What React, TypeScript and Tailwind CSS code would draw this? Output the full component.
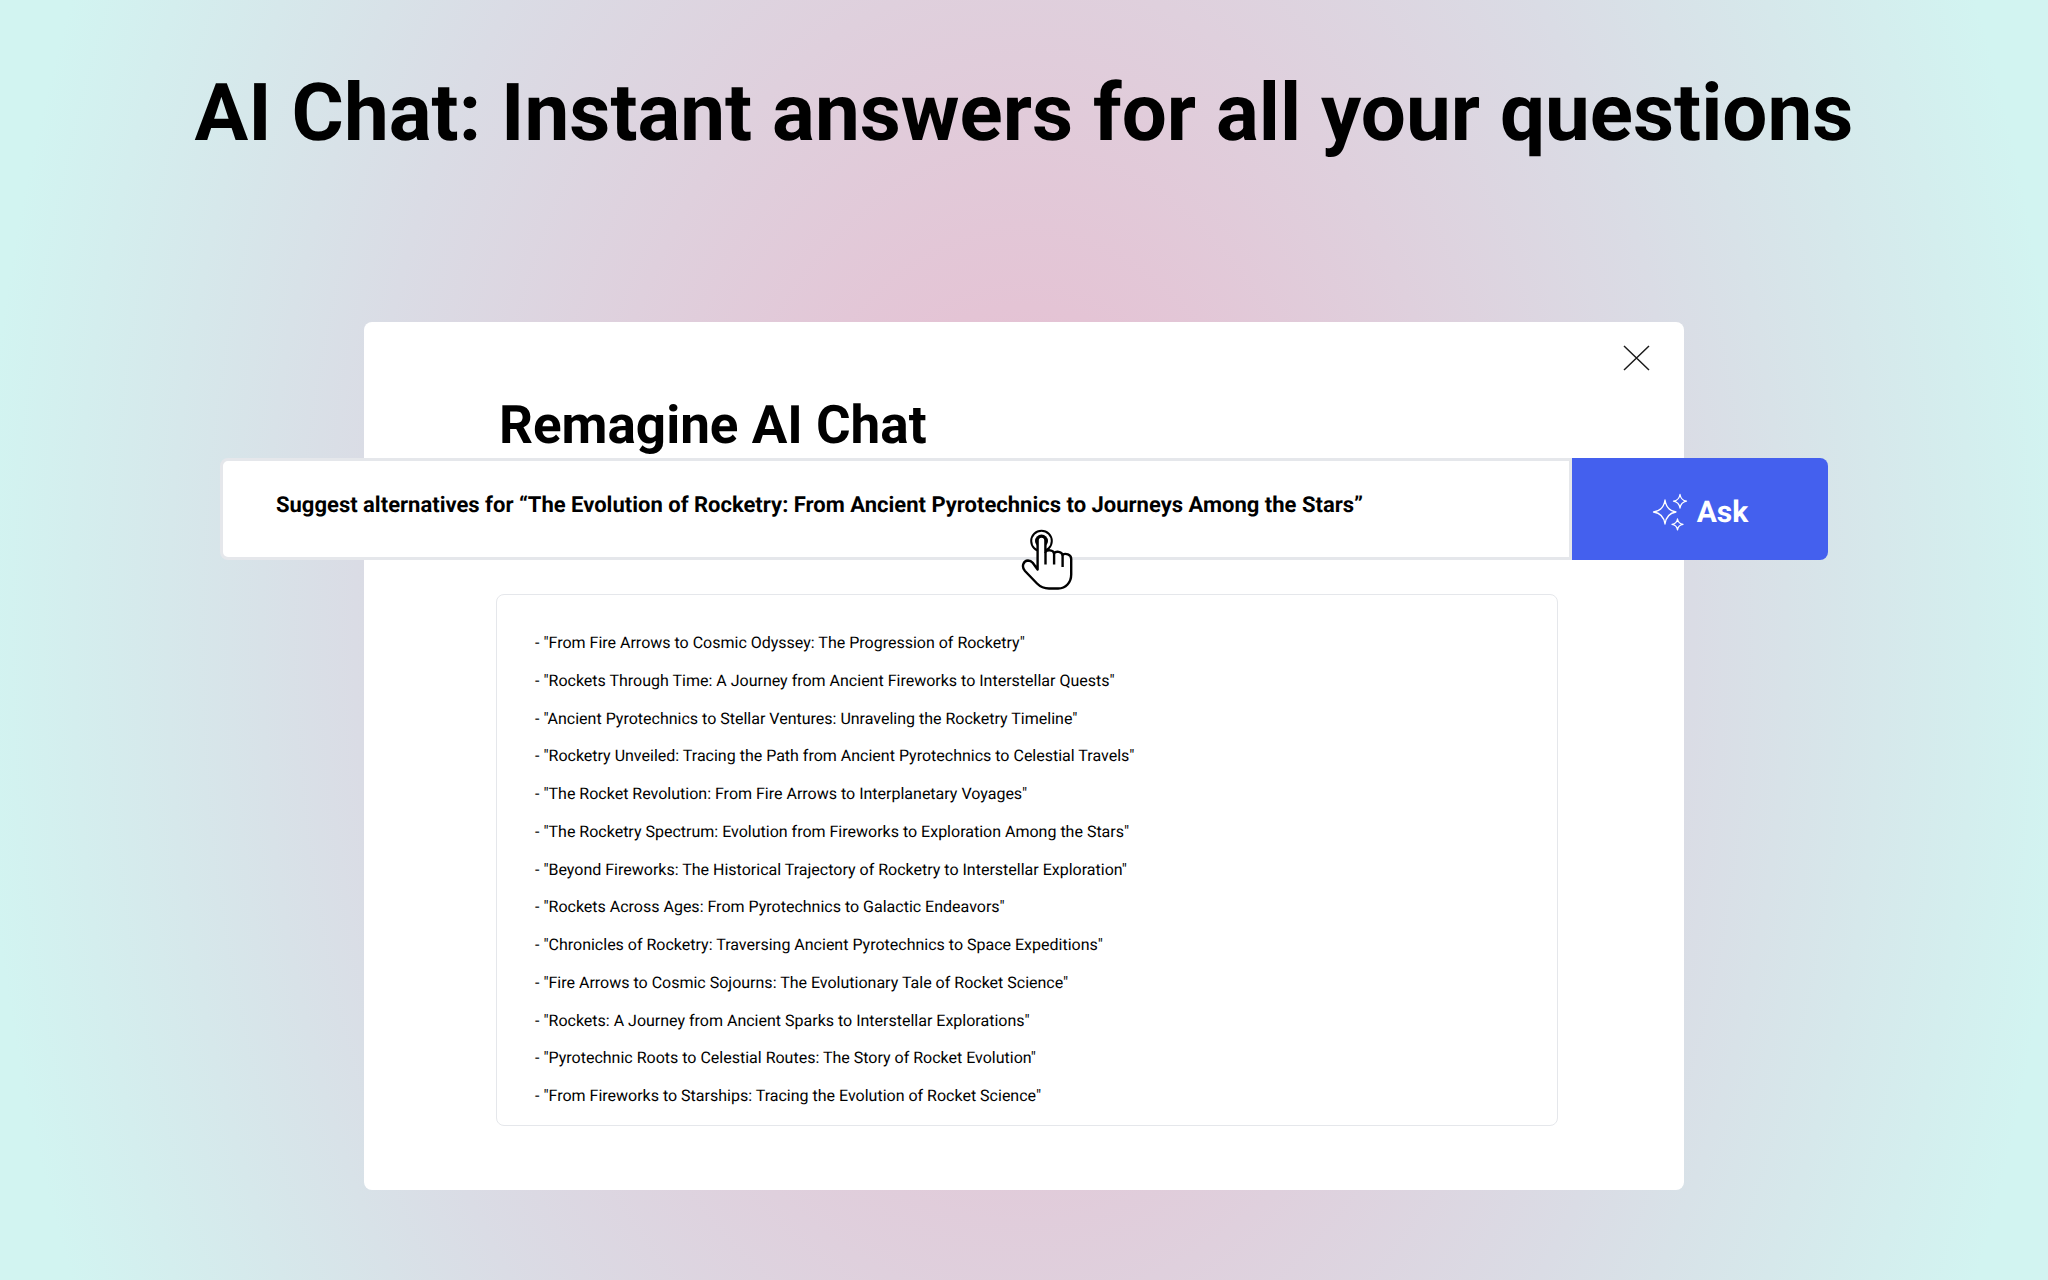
const results = [
  "From Fire Arrows to Cosmic Odyssey: The Progression of Rocketry",
  "Rockets Through Time: A Journey from Ancient Fireworks to Interstellar Quests",
  "Ancient Pyrotechnics to Stellar Ventures: Unraveling the Rocketry Timeline",
  "Rocketry Unveiled: Tracing the Path from Ancient Pyrotechnics to Celestial Travels",
  "The Rocket Revolution: From Fire Arrows to Interplanetary Voyages",
  "The Rocketry Spectrum: Evolution from Fireworks to Exploration Among the Stars",
  "Beyond Fireworks: The Historical Trajectory of Rocketry to Interstellar Exploration",
  "Rockets Across Ages: From Pyrotechnics to Galactic Endeavors",
  "Chronicles of Rocketry: Traversing Ancient Pyrotechnics to Space Expeditions",
  "Fire Arrows to Cosmic Sojourns: The Evolutionary Tale of Rocket Science",
  "Rockets: A Journey from Ancient Sparks to Interstellar Explorations",
  "Pyrotechnic Roots to Celestial Routes: The Story of Rocket Evolution",
  "From Fireworks to Starships: Tracing the Evolution of Rocket Science",
];

function CloseIcon() {
  return (
    <svg width="27" height="26" viewBox="0 0 27 26" fill="none" stroke="#1a1a1a" strokeWidth="1.5" aria-hidden="true">
      <path d="M1 1l25 24M26 1L1 25" />
    </svg>
  );
}

function SparklesIcon() {
  return (
    <svg width="36" height="38" viewBox="0 0 36 38" fill="none" stroke="white" strokeWidth="1.3" strokeLinejoin="round" aria-hidden="true">
      <path d="M13 7C14 14.500 17.500 18 24 19C17.500 20 14 23.500 13 31C12 23.500 8.500 20 1.500 19C8.500 18 12 14.500 13 7Z" />
      <path d="M28 1.500C28.600 5.500 30.500 7.500 34.500 8.200C30.500 9 28.600 11 28 15C27.400 11 25.500 9 21.500 8.200C25.500 7.500 27.400 5.500 28 1.500Z" />
      <path d="M25.500 26C26 29.300 27.500 30.800 31 31.400C27.500 32 26 33.500 25.500 36.800C25 33.500 23.500 32 20 31.400C23.500 30.800 25 29.300 25.500 26Z" />
    </svg>
  );
}

function HandPointer() {
  return (
    <svg className="pointer-events-none absolute left-[801px] top-[71px]" width="52" height="62" viewBox="0 0 52 62" fill="none" stroke="black" strokeWidth="2.4" strokeLinecap="butt" strokeLinejoin="round" aria-hidden="true">
      <circle cx="20.500" cy="12" r="10.300" fill="white" stroke="black" strokeWidth="2" />
      <circle cx="20.500" cy="12" r="6.500" fill="black" stroke="none" />
      <path fill="white" d="M16.600 40.500V11.500a3.900 3.900 0 0 1 7.800 0V23c1.500-2.500 8-2.300 8.600 1.200c2-2.300 7.600-1.700 8.400 1.500c3-1.800 8.800-.6 8.800 4.300V45.500c0 8-5.500 14-13 14H28c-5 0-8.500-1.500-12-5L4 42C0 37.500 2.500 31.700 7 31.500c2.300 0 3.500.8 4.700 2.200z" />
      <path d="M24.500 23v12.500M33.100 24v11.500M41.600 26v12" />
    </svg>
  );
}

export default function App() {
  return (
    <main className="flex min-h-screen flex-col items-center bg-[radial-gradient(ellipse_51%_122%_at_50%_50%,#e9b8cd_0%,#dadce5_64%,#d2f4f1_100%)] pb-[90px] font-['Roboto',sans-serif] text-black [text-rendering:geometricPrecision]">
      <h1 className="pt-[65px] text-center text-[80px] leading-[96px] font-bold">
        AI Chat: Instant answers for all your questions
      </h1>

      <section className="mt-[161px] flex w-[1320px] max-w-full flex-1 flex-col rounded-lg bg-white" aria-labelledby="chat-title">
        <div className="flex justify-end pt-[23px] pr-[34px]">
          <button type="button" aria-label="Close">
            <CloseIcon />
          </button>
        </div>
        <h2 id="chat-title" className="mt-[22px] ml-[135px] text-[53px] leading-[64px] font-bold">
          Remagine AI Chat
        </h2>

        <form className="relative -mx-[144px] mt-px flex h-[102px]" onSubmit={(e) => e.preventDefault()}>
          <input
            type="text"
            aria-label="Your question"
            defaultValue="Suggest alternatives for “The Evolution of Rocketry: From Ancient Pyrotechnics to Journeys Among the Stars”"
            className="min-w-0 flex-1 rounded-l-lg border-[3px] border-gray-200 bg-white pb-[8px] pl-[53px] text-[22px] font-bold outline-none [text-rendering:geometricPrecision]"
          />
          <button type="submit" className="flex w-[256px] items-center justify-center gap-[9px] rounded-r-lg bg-[#4460ee] pt-[6px] text-[30px] font-bold text-white [text-rendering:geometricPrecision]">
            <SparklesIcon />
            Ask
          </button>
          <HandPointer />
        </form>

        <ul className="mr-[126px] mb-[64px] ml-[132px] mt-[34px] flex flex-1 flex-col justify-between rounded-lg border border-gray-200 pt-[36px] pb-[17px] pl-[38px] text-[16px] leading-[24px]">
          {results.map((title) => (
            <li key={title}>{`- "${title}"`}</li>
          ))}
        </ul>
      </section>
    </main>
  );
}
